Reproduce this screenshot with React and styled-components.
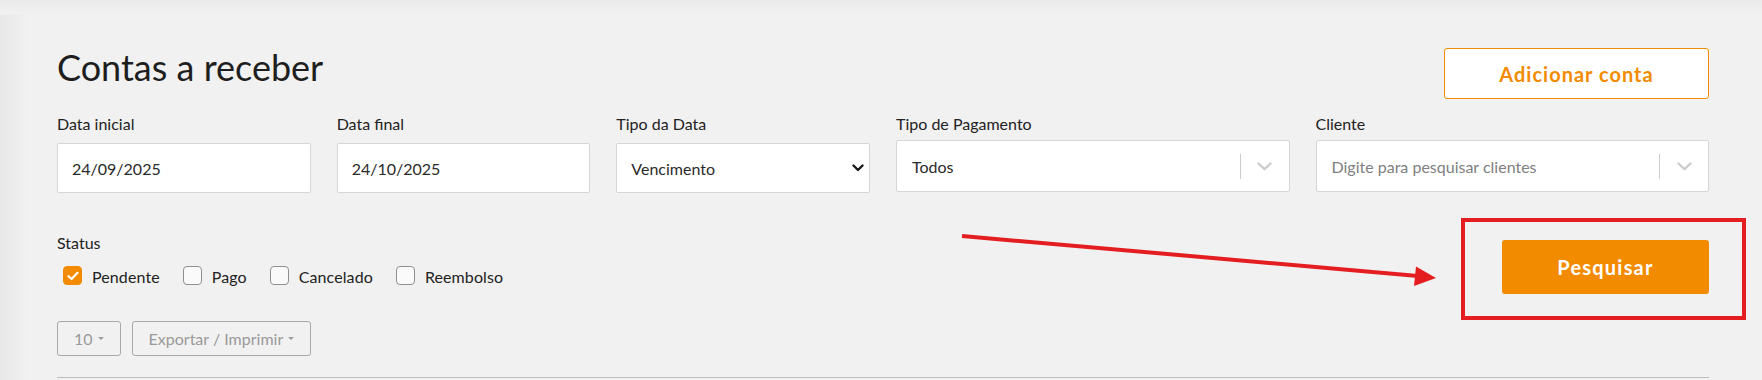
import React from "react";
import styled, { createGlobalStyle } from "styled-components";

const ORANGE = "#f28b00";
const FONT = `Lato, "Noto Sans", "Liberation Sans", sans-serif`;

const GlobalStyle = createGlobalStyle`
  html, body {
    margin: 0;
    padding: 0;
    background: #f1f1f1;
    font-family: ${FONT};
    color: #222;
  }
  * { box-sizing: border-box; }
`;

const Page = styled.div`
  position: relative;
  width: 1762px;
  height: 380px;
  overflow: hidden;
  padding: 45px 53px 0 57px;
  background:
    linear-gradient(to bottom, #eaeaea 0px, #f1f1f1 14px, rgba(241,241,241,0) 15px),
    linear-gradient(to right, #e8e8e8 0px, #ececec 16px, #f1f1f1 28px);
`;

const Header = styled.div`
  display: flex;
  justify-content: space-between;
  align-items: flex-start;
`;

const Title = styled.h1`
  margin: 0;
  font-size: 36px;
  line-height: 44px;
  font-weight: 400;
  color: #1e1e1e;
`;

const OutlineButton = styled.button`
  margin-top: 3px;
  width: 265px;
  height: 51px;
  background: #fff;
  border: 1px solid ${ORANGE};
  border-radius: 3px;
  color: ${ORANGE};
  font-family: ${FONT};
  font-size: 20px;
  font-weight: 700;
  letter-spacing: 1px;
  cursor: pointer;
`;

const FieldGrid = styled.div`
  margin-top: 14px;
  display: grid;
  grid-template-columns: repeat(12, 1fr);
  column-gap: 26px;
`;

const Field = styled.div`
  grid-column: span ${(p) => p.$span};
  display: flex;
  flex-direction: column;
`;

const Label = styled.label`
  font-size: 16px;
  line-height: 22px;
  color: #222;
`;

const TextInput = styled.div`
  margin-top: 8px;
  height: 50px;
  background: #fff;
  border: 1px solid #d6d6d6;
  border-radius: 2px;
  padding: 0 14px;
  display: flex;
  align-items: center;
  font-size: 16px;
  color: #2a2a2a;
`;

const NativeSelect = styled(TextInput)`
  justify-content: space-between;
  padding: 0 5px 0 14px;
`;

const ComboBox = styled.div`
  margin-top: 5px;
  height: 52px;
  background: #fff;
  border: 1px solid #d6d6d6;
  border-radius: 2px;
  display: flex;
  align-items: center;
`;

const ComboValue = styled.div`
  flex: 1;
  padding-left: 15px;
  font-size: 16px;
  color: ${(p) => (p.$placeholder ? "#808080" : "#2a2a2a")};
`;

const Separator = styled.span`
  width: 1px;
  height: 25px;
  background: #cccccc;
`;

const Indicator = styled.div`
  width: 48px;
  display: flex;
  justify-content: center;
  align-items: center;
`;

const SecondRow = styled.div`
  margin-top: 39px;
  display: flex;
  justify-content: space-between;
  align-items: flex-start;
`;

const StatusBlock = styled.div`
  display: flex;
  flex-direction: column;
`;

const CheckRow = styled.div`
  margin-top: 12px;
  display: flex;
  align-items: flex-start;
  gap: 23px;
  padding-left: 6px;
`;

const CheckItem = styled.label`
  display: flex;
  align-items: flex-start;
  gap: 10px;
  font-size: 16px;
  line-height: 22px;
  letter-spacing: 0.1px;
  color: #222;
`;

const Box = styled.span`
  width: 19px;
  height: 19px;
  border-radius: 4px;
  border: 1px solid ${(p) => (p.$checked ? ORANGE : "#8f8f8f")};
  background: ${(p) => (p.$checked ? ORANGE : "#fafafa")};
  display: flex;
  align-items: center;
  justify-content: center;
`;

const SearchWrap = styled.div`
  position: relative;
  margin-top: 8px;
`;

const SolidButton = styled.button`
  width: 207px;
  height: 54px;
  border: none;
  border-radius: 3px;
  background: ${ORANGE};
  color: #fff;
  font-family: ${FONT};
  font-size: 20px;
  font-weight: 700;
  letter-spacing: 1.2px;
`;

const Highlight = styled.span`
  position: absolute;
  top: -22px;
  left: -41px;
  right: -37px;
  bottom: -26px;
  border: 4px solid #e41e20;
  pointer-events: none;
`;

const Toolbar = styled.div`
  margin-top: 27px;
  display: flex;
  gap: 11px;
`;

const GhostButton = styled.button`
  height: 35px;
  padding: 0 16px 0 16px;
  background: transparent;
  border: 1px solid #a8a8a8;
  border-radius: 3px;
  color: #9a9a9a;
  font-family: ${FONT};
  font-size: 16px;
  display: flex;
  align-items: center;
  gap: 5px;
`;

const Caret = styled.span`
  width: 0;
  height: 0;
  border-left: 3px solid transparent;
  border-right: 3px solid transparent;
  border-top: 3.5px solid #9a9a9a;
`;

const TableTop = styled.div`
  margin-top: 21px;
  border-top: 1px solid #bdbdbd;
`;

const Overlay = styled.svg`
  position: absolute;
  left: 0;
  top: 0;
  pointer-events: none;
`;

const LightChevron = () => (
  <svg width="15" height="9" viewBox="0 0 15 9">
    <path d="M1.5 1.5 L7.5 7.2 L13.5 1.5" fill="none" stroke="#cccccc" strokeWidth="2.4" strokeLinecap="round" strokeLinejoin="round" />
  </svg>
);

const DarkChevron = () => (
  <svg width="12" height="8" viewBox="0 0 12 8">
    <path d="M1.5 1.5 L6 6 L10.5 1.5" fill="none" stroke="#1a1a1a" strokeWidth="2.4" strokeLinecap="round" strokeLinejoin="round" />
  </svg>
);

const Check = () => (
  <svg width="12" height="10" viewBox="0 0 12 10">
    <path d="M1.5 5.2 L4.6 8 L10.5 1.8" fill="none" stroke="#fff" strokeWidth="2.2" strokeLinecap="round" strokeLinejoin="round" />
  </svg>
);

const statuses = [
  { label: "Pendente", checked: true },
  { label: "Pago", checked: false },
  { label: "Cancelado", checked: false },
  { label: "Reembolso", checked: false },
];

export default function App() {
  return (
    <>
      <GlobalStyle />
      <Page>
        <Header>
          <Title>Contas a receber</Title>
          <OutlineButton>Adicionar conta</OutlineButton>
        </Header>

        <FieldGrid>
          <Field $span={2}>
            <Label>Data inicial</Label>
            <TextInput>24/09/2025</TextInput>
          </Field>
          <Field $span={2}>
            <Label>Data final</Label>
            <TextInput>24/10/2025</TextInput>
          </Field>
          <Field $span={2}>
            <Label>Tipo da Data</Label>
            <NativeSelect>
              <span>Vencimento</span>
              <DarkChevron />
            </NativeSelect>
          </Field>
          <Field $span={3}>
            <Label>Tipo de Pagamento</Label>
            <ComboBox>
              <ComboValue>Todos</ComboValue>
              <Separator />
              <Indicator>
                <LightChevron />
              </Indicator>
            </ComboBox>
          </Field>
          <Field $span={3}>
            <Label>Cliente</Label>
            <ComboBox>
              <ComboValue $placeholder>Digite para pesquisar clientes</ComboValue>
              <Separator />
              <Indicator>
                <LightChevron />
              </Indicator>
            </ComboBox>
          </Field>
        </FieldGrid>

        <SecondRow>
          <StatusBlock>
            <Label>Status</Label>
            <CheckRow>
              {statuses.map((s) => (
                <CheckItem key={s.label}>
                  <Box $checked={s.checked}>{s.checked && <Check />}</Box>
                  {s.label}
                </CheckItem>
              ))}
            </CheckRow>
          </StatusBlock>
          <SearchWrap>
            <SolidButton>Pesquisar</SolidButton>
            <Highlight />
          </SearchWrap>
        </SecondRow>

        <Toolbar>
          <GhostButton>
            10 <Caret />
          </GhostButton>
          <GhostButton>
            Exportar / Imprimir <Caret />
          </GhostButton>
        </Toolbar>

        <TableTop />

        <Overlay width="1762" height="380" viewBox="0 0 1762 380">
          <line x1="962" y1="236" x2="1418" y2="276" stroke="#e41e20" strokeWidth="4" />
          <polygon points="1436,278 1416,266.5 1414,286" fill="#e41e20" />
        </Overlay>
      </Page>
    </>
  );
}
